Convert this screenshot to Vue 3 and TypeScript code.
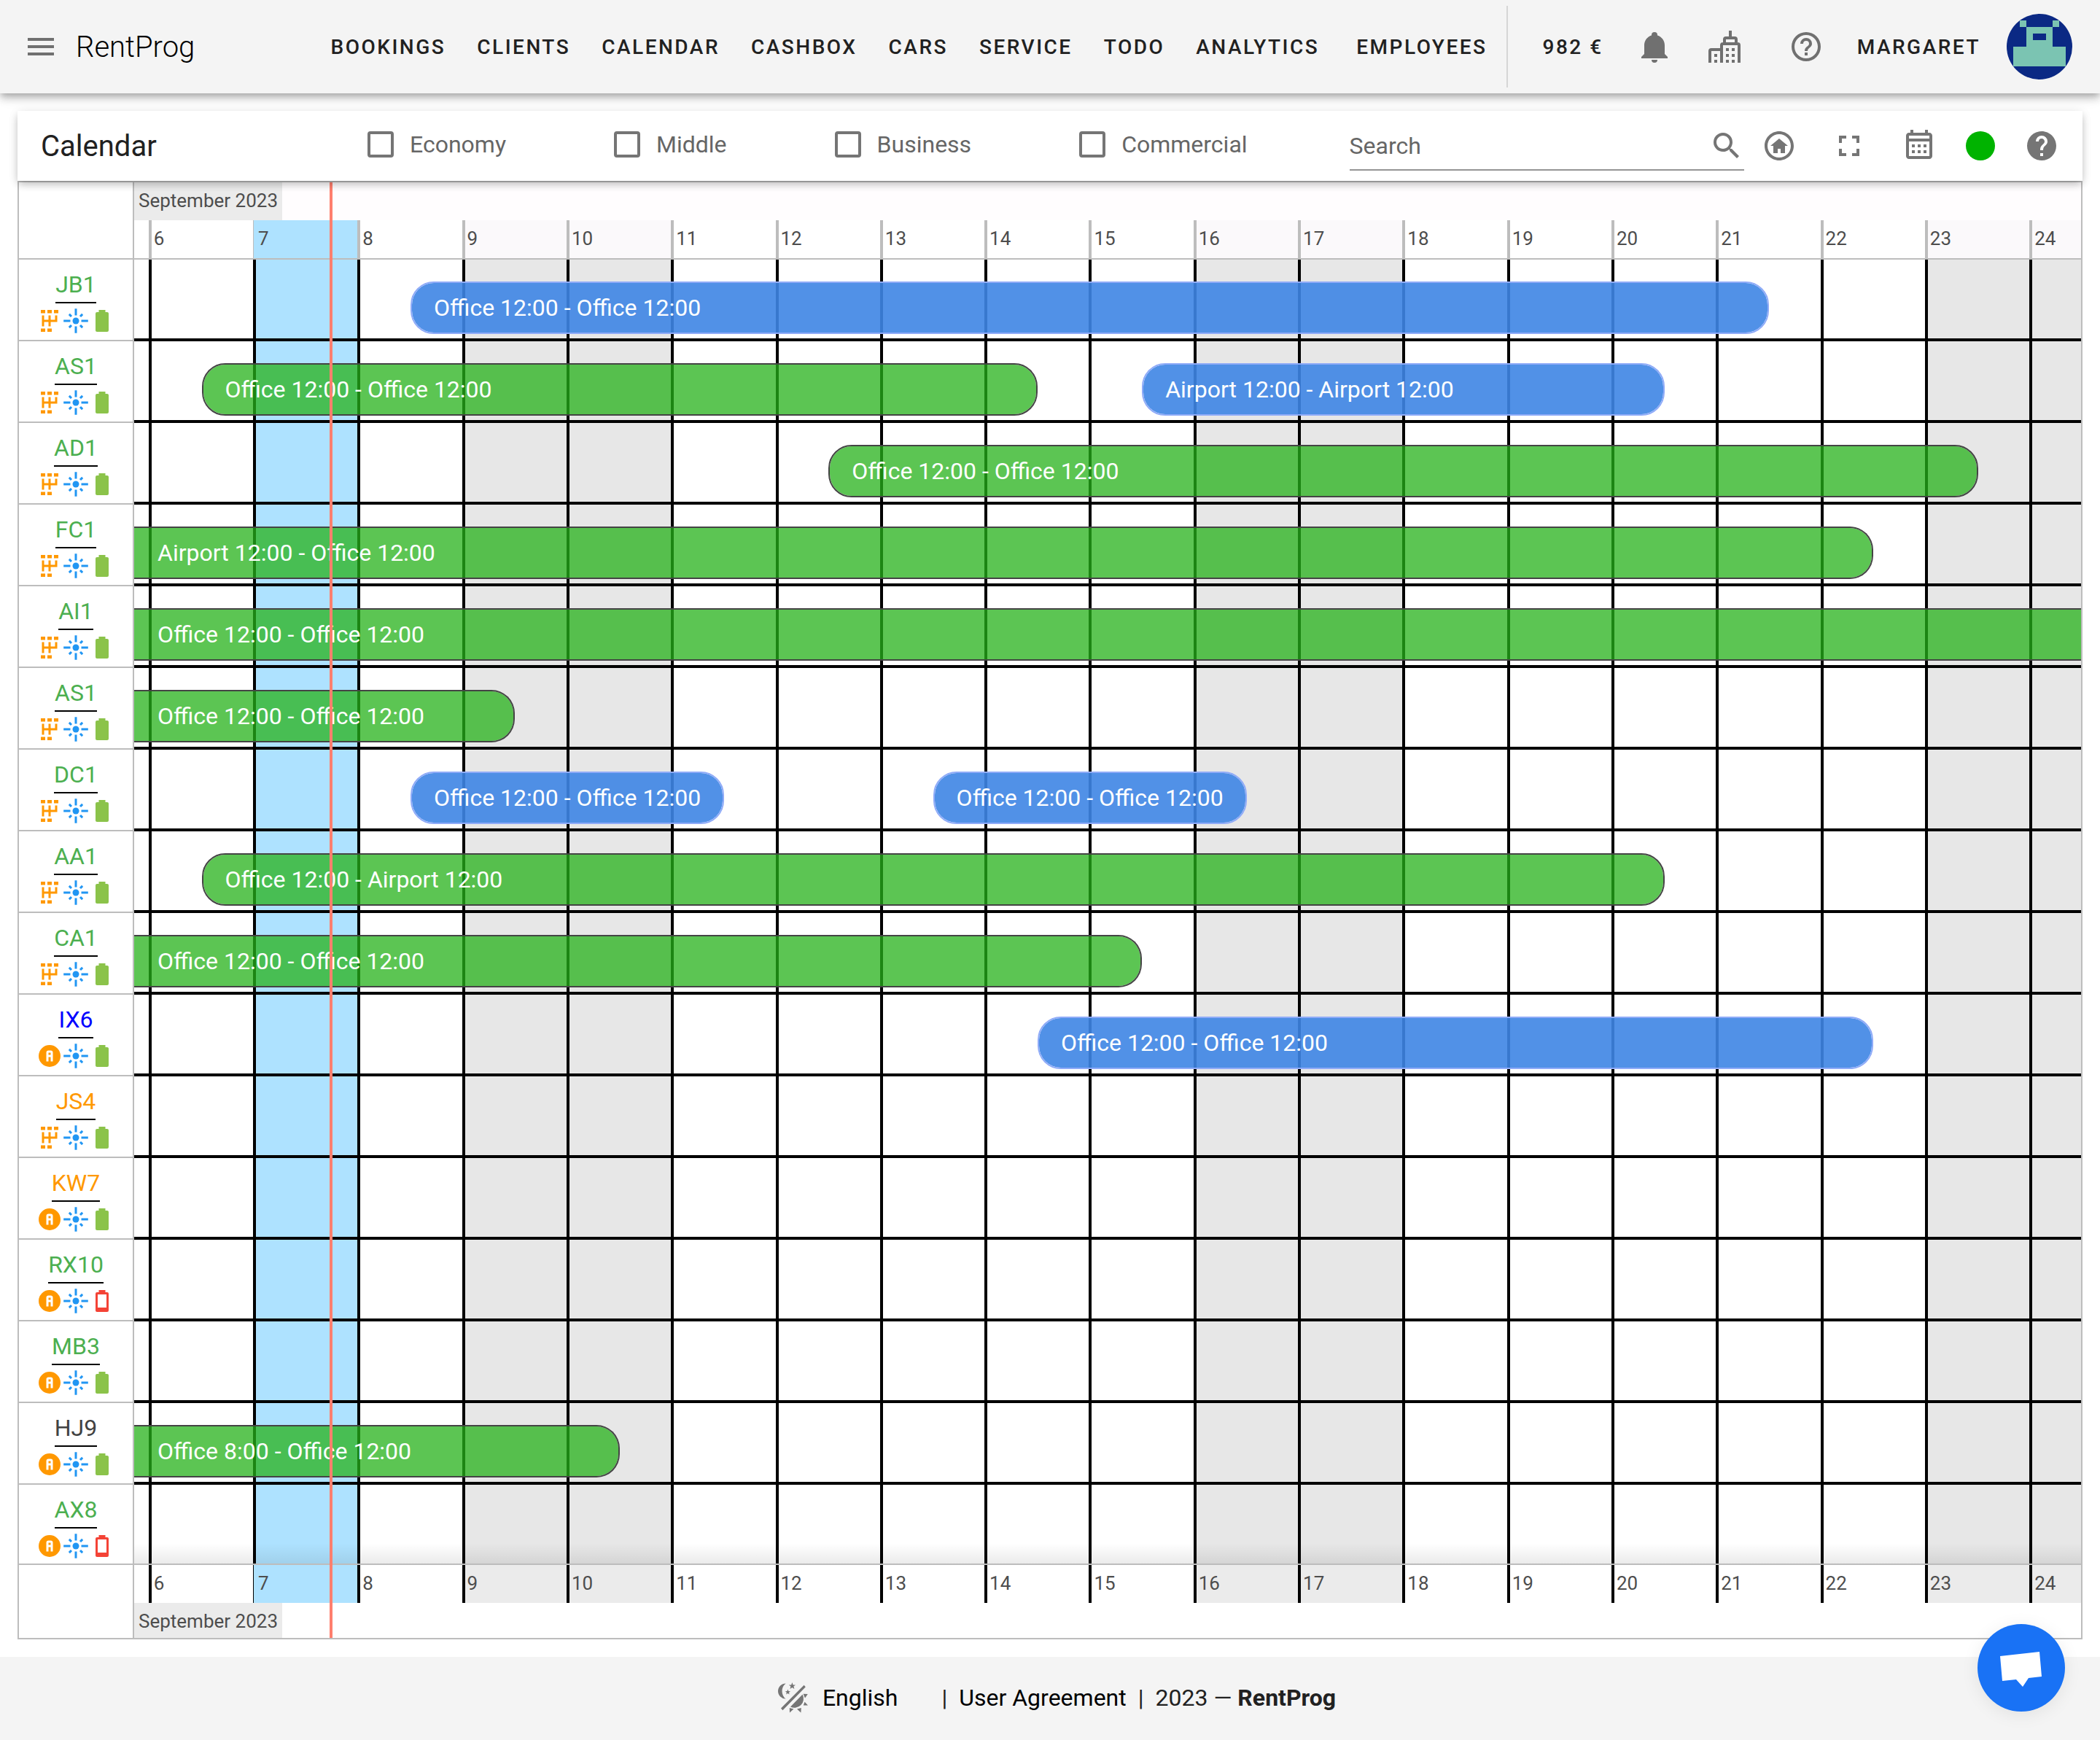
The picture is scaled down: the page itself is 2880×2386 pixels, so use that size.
<script setup lang="ts">
type Gear = 'manual' | 'auto'
type Charge = 'full' | 'low'
type Kind = 'active' | 'planned'

interface Booking {
  from: number
  to: number
  kind: Kind
  text: string
}

interface Car {
  code: string
  tone: string
  gear: Gear
  charge: Charge
  bookings: Booking[]
}

const navItems = ['Bookings', 'Clients', 'Calendar', 'Cashbox', 'Cars', 'Service', 'Todo', 'Analytics']
const classes = ['Economy', 'Middle', 'Business', 'Commercial']

const icons = {
  menu: 'M3,6H21V8H3V6M3,11H21V13H3V11M3,16H21V18H3V16Z',
  bell: 'M21,19V20H3V19L5,17V11C5,7.9 7.03,5.17 10,4.29C10,4.19 10,4.1 10,4A2,2 0 0,1 12,2A2,2 0 0,1 14,4C14,4.1 14,4.19 14,4.29C16.97,5.17 19,7.9 19,11V17L21,19M14,21A2,2 0 0,1 12,23A2,2 0 0,1 10,21',
  helpOutline: 'M11,18H13V16H11V18M12,2A10,10 0 0,0 2,12A10,10 0 0,0 12,22A10,10 0 0,0 22,12A10,10 0 0,0 12,2M12,20C7.59,20 4,16.41 4,12C4,7.59 7.59,4 12,4C16.41,4 20,7.59 20,12C20,16.41 16.41,20 12,20M12,6A4,4 0 0,0 8,10H10A2,2 0 0,1 12,8A2,2 0 0,1 14,10C14,12 11,11.75 11,15H13C13,12.75 16,12.5 16,10A4,4 0 0,0 12,6Z',
  help: 'M15.07,11.25L14.17,12.17C13.45,12.89 13,13.5 13,15H11V14.5C11,13.39 11.45,12.39 12.17,11.67L13.41,10.41C13.78,10.05 14,9.55 14,9C14,7.89 13.1,7 12,7A2,2 0 0,0 10,9H8A4,4 0 0,1 12,5A4,4 0 0,1 16,9C16,9.88 15.64,10.67 15.07,11.25M13,19H11V17H13M12,2A10,10 0 0,0 2,12A10,10 0 0,0 12,22A10,10 0 0,0 22,12C22,6.47 17.5,2 12,2Z',
  search: 'M9.5,3A6.5,6.5 0 0,1 16,9.5C16,11.11 15.41,12.59 14.44,13.73L14.71,14H15.5L20.5,19L19,20.5L14,15.5V14.71L13.73,14.44C12.59,15.41 11.11,16 9.5,16A6.5,6.5 0 0,1 3,9.5A6.5,6.5 0 0,1 9.5,3M9.5,5C7,5 5,7 5,9.5C5,12 7,14 9.5,14C12,14 14,12 14,9.5C14,7 12,5 9.5,5Z',
  home: 'M12,20C7.6,20 4,16.4 4,12C4,7.6 7.6,4 12,4C16.4,4 20,7.6 20,12C20,16.4 16.4,20 12,20M12,2C6.5,2 2,6.5 2,12C2,17.5 6.5,22 12,22C17.5,22 22,17.5 22,12C22,6.5 17.5,2 12,2M12,7L6,12H8V17H11V14H13V17H16V12H18L12,7Z',
  fullscreen: 'M5,5H10V7H7V10H5V5M14,5H19V10H17V7H14V5M17,14H19V19H14V17H17V14M10,17V19H5V14H7V17H10Z',
  calendar: 'M7 11H9V13H7V11M21 5V19C21 20.11 20.11 21 19 21H5C3.89 21 3 20.1 3 19V5C3 3.9 3.9 3 5 3H6V1H8V3H16V1H18V3H19C20.11 3 21 3.9 21 5M5 7H19V5H5V7M19 19V9H5V19H19M15 13V11H17V13H15M11 13V11H13V13H11M7 15H9V17H7V15M15 17V15H17V17H15M11 17V15H13V17H11Z',
  manual: 'M4,2H8V5H4V2M10,2H14V5H10V2M16,2H20V5H16V2M4,19H8V22H4V19M10,19H14V22H10V19M5,7H7V11H11V7H13V11H17V7H19V13H13V17H11V13H7V17H5V7Z',
  auto: 'M11,7A2,2 0 0,0 9,9V17H11V13H13V17H15V9A2,2 0 0,0 13,7H11M11,9H13V11H11V9M12,2A10,10 0 0,1 22,12A10,10 0 0,1 12,22A10,10 0 0,1 2,12A10,10 0 0,1 12,2Z',
  full: 'M16.67,4H15V2H9V4H7.33A1.33,1.33 0 0,0 6,5.33V20.67C6,21.4 6.6,22 7.33,22H16.67A1.33,1.33 0 0,0 18,20.67V5.33C18,4.6 17.4,4 16.67,4Z',
  low: 'M16,18H8V6H16M16.67,4H15V2H9V4H7.33A1.33,1.33 0 0,0 6,5.33V20.67C6,21.4 6.6,22 7.33,22H16.67A1.33,1.33 0 0,0 18,20.67V5.33C18,4.6 17.4,4 16.67,4Z',
}

// The visible window, in days of September: a sliver of the 5th up to the middle of the 24th.
const firstVisible = 5.8625
const lastVisible = 24.4945
const now = 7.733
const days = Array.from({ length: 19 }, (_, i) => i + 6)
const weekend = new Set([9, 10, 16, 17, 23, 24])

const lineInset = 0.008

const percent = (day: number) => ((day - firstVisible) / (lastVisible - firstVisible)) * 100

const barStyle = (b: Booking) => {
  const left = percent(Math.max(b.from + lineInset, firstVisible))
  const right = percent(Math.min(b.to + lineInset, lastVisible))
  return { left: `${left}%`, width: `${right - left}%` }
}

const dayClass = (d: number) => ({ today: d === 7, weekend: weekend.has(d) })

const oo = 'Office 12:00 - Office 12:00'
const car = (code: string, tone: string, gear: Gear, charge: Charge, bookings: Booking[] = []): Car =>
  ({ code, tone, gear, charge, bookings })
const active = (from: number, to: number, text = oo): Booking => ({ from, to, kind: 'active', text })
const planned = (from: number, to: number, text = oo): Booking => ({ from, to, kind: 'planned', text })

const cars: Car[] = [
  car('JB1', 'green', 'manual', 'full', [planned(8.5, 21.5)]),
  car('AS1', 'green', 'manual', 'full', [active(6.5, 14.5), planned(15.5, 20.5, 'Airport 12:00 - Airport 12:00')]),
  car('AD1', 'green', 'manual', 'full', [active(12.5, 23.5)]),
  car('FC1', 'green', 'manual', 'full', [active(1.5, 22.5, 'Airport 12:00 - Office 12:00')]),
  car('AI1', 'green', 'manual', 'full', [active(1.5, 28.5)]),
  car('AS1', 'green', 'manual', 'full', [active(1.5, 9.5)]),
  car('DC1', 'green', 'manual', 'full', [planned(8.5, 11.5), planned(13.5, 16.5)]),
  car('AA1', 'green', 'manual', 'full', [active(6.5, 20.5, 'Office 12:00 - Airport 12:00')]),
  car('CA1', 'green', 'manual', 'full', [active(1.5, 15.5)]),
  car('IX6', 'blue', 'auto', 'full', [planned(14.5, 22.5)]),
  car('JS4', 'orange', 'manual', 'full'),
  car('KW7', 'orange', 'auto', 'full'),
  car('RX10', 'green', 'auto', 'low'),
  car('MB3', 'green', 'auto', 'full'),
  car('HJ9', 'dark', 'auto', 'full', [active(1.5, 10.5, 'Office 8:00 - Office 12:00')]),
  car('AX8', 'green', 'auto', 'low'),
]
</script>

<template>
  <div class="app">
    <header class="topbar">
      <button class="icon-btn" type="button" aria-label="Menu">
        <svg class="icon" viewBox="0 0 24 24"><path :d="icons.menu" /></svg>
      </button>
      <span class="brand">RentProg</span>
      <nav class="nav">
        <a v-for="item in navItems" :key="item" href="#">{{ item }}</a>
        <a class="employees" href="#">Employees</a>
      </nav>
      <div class="account">
        <a class="balance" href="#">982 €</a>
        <button class="icon-btn bell" type="button" aria-label="Notifications">
          <svg class="icon" viewBox="0 0 24 24"><path :d="icons.bell" /></svg>
        </button>
        <button class="icon-btn city" type="button" aria-label="Branches">
          <svg class="icon" viewBox="0 0 24 24">
            <g fill="none" stroke="currentColor" stroke-width="2">
              <path d="M2 23V15a1 1 0 0 1 1-1H10M10 23V11a1 1 0 0 1 1-1H21a1 1 0 0 1 1 1V23M12 10V7a1 1 0 0 1 1-1H19a1 1 0 0 1 1 1V10M16 1V6" />
            </g>
            <path d="M13 13H15V15H13ZM17 13H19V15H17ZM13 17H15V19H13ZM17 17H19V19H17ZM13 21H15V23H13ZM17 21H19V23H17ZM5 17H7V19H5ZM5 21H7V23H5Z" />
          </svg>
        </button>
        <button class="icon-btn faq" type="button" aria-label="Help">
          <svg class="icon" viewBox="0 0 24 24"><path :d="icons.helpOutline" /></svg>
        </button>
        <a class="user" href="#">Margaret</a>
        <svg class="avatar" viewBox="0 0 10 10" shape-rendering="crispEdges" aria-hidden="true">
          <rect width="10" height="10" fill="#0b2984" />
          <path fill="#7bc4b2" fill-rule="evenodd" d="M2 1H3V2H7V1H8V2H7V5H9V8H1V5H3V2H2ZM4 3V4H6V3Z" />
        </svg>
      </div>
    </header>

    <main class="content">
      <section class="toolbar">
        <h1 class="title">Calendar</h1>
        <div class="filters">
          <label v-for="c in classes" :key="c" class="filter">
            <input type="checkbox" class="check" />
            <span>{{ c }}</span>
          </label>
        </div>
        <div class="search">
          <input type="text" placeholder="Search" aria-label="Search" />
          <svg class="icon" viewBox="0 0 24 24"><path :d="icons.search" /></svg>
        </div>
        <div class="tools">
          <button class="icon-btn" type="button" aria-label="Home">
            <svg class="icon" viewBox="0 0 24 24"><path :d="icons.home" /></svg>
          </button>
          <button class="icon-btn" type="button" aria-label="Full screen">
            <svg class="icon" viewBox="0 0 24 24"><path :d="icons.fullscreen" /></svg>
          </button>
          <button class="icon-btn" type="button" aria-label="Choose dates">
            <svg class="icon" viewBox="0 0 24 24"><path :d="icons.calendar" /></svg>
          </button>
        </div>
        <div class="status">
          <span class="dot"></span>
          <button class="icon-btn" type="button" aria-label="Legend">
            <svg class="icon" viewBox="0 0 24 24"><path :d="icons.help" /></svg>
          </button>
        </div>
      </section>

      <section class="board">
        <div class="head">
          <div class="side"></div>
          <div class="axis">
            <div class="month"><span>September 2023</span></div>
            <div class="days">
              <div></div>
              <div v-for="d in days" :key="d" class="day" :class="dayClass(d)">{{ d }}</div>
            </div>
          </div>
        </div>

        <div v-for="(c, i) in cars" :key="i" class="row">
          <div class="side">
            <a class="code" :class="c.tone" href="#">{{ c.code }}</a>
            <div class="marks">
              <svg class="mark gear" viewBox="0 0 24 24"><path :d="icons[c.gear]" /></svg>
              <svg class="mark wash" viewBox="0 0 24 24">
                <circle cx="12" cy="12" r="3" />
                <path fill="none" stroke="currentColor" stroke-width="2" d="M12 .8V7M12 17V23.200M.8 12H7M17 12H23.200M5.900 5.900L8 8M16 16L18.100 18.100M18.100 5.900L16 8M8 16L5.900 18.100" />
              </svg>
              <svg class="mark" :class="c.charge" viewBox="0 0 24 24"><path :d="icons[c.charge]" /></svg>
            </div>
          </div>
          <div class="lane">
            <div class="cells">
              <div></div>
              <div v-for="d in days" :key="d" class="cell" :class="dayClass(d)"></div>
            </div>
            <a
              v-for="b in c.bookings"
              :key="b.from"
              class="bar"
              :class="[b.kind, { 'open-left': b.from < firstVisible, 'open-right': b.to > lastVisible }]"
              :style="barStyle(b)"
              href="#"
            >{{ b.text }}</a>
          </div>
        </div>

        <div class="head foot">
          <div class="side"></div>
          <div class="axis">
            <div class="days">
              <div></div>
              <div v-for="d in days" :key="d" class="day" :class="dayClass(d)">{{ d }}</div>
            </div>
            <div class="month"><span>September 2023</span></div>
          </div>
        </div>

        <div class="overlay">
          <div class="now" :style="{ left: percent(now) + '%' }"></div>
        </div>
      </section>
    </main>

    <footer class="footer">
      <button class="icon-btn" type="button" aria-label="Switch theme">
        <svg class="icon" viewBox="0 0 24 24">
          <path d="M19.300 3.400L20.400 4.600L4.700 20.600L3.500 19.200ZM6.800 2.200A5.300 5.300 0 0 0 6.800 12.800A6.800 6.800 0 0 1 6.800 2.200Z" />
          <path d="M18.300 9.800A6.200 6.200 0 0 1 10 18.200Z" />
          <path d="M18.800 9.400L21.900 9.500L20 12.300ZM19.800 14.900L22 17.200L18.900 17.200ZM9.400 19L12.200 19.800L9.500 22.200ZM14.500 19.800L17.400 19L17.200 22.200Z" />
          <path d="M11.200 1.500L11.800 3.200L13.500 3.200L12.200 4.300L12.700 6L11.200 5L9.700 6L10.200 4.300L8.900 3.200L10.600 3.200ZM8.200 6.200L8.700 7.500L10 7.600L9 8.400L9.300 9.700L8.200 9L7.100 9.700L7.400 8.400L6.400 7.600L7.700 7.500Z" />
        </svg>
      </button>
      <button class="lang" type="button">English</button>
      <span>|</span>
      <a href="#">User Agreement</a>
      <span>|</span>
      <span>2023 — <strong>RentProg</strong></span>
    </footer>

    <button class="chat" type="button" aria-label="Open chat">
      <svg viewBox="-60 -60 120 120"><path fill="#fff" d="M-29-16L25-22L28 12L10 14L2 26L-7 16L-26 18Z" /></svg>
    </button>
  </div>
</template>

<style>
body {
  margin: 0;
  background: #fff;
}
</style>

<style scoped>
.app {
  font-family: Roboto, sans-serif;
  font-size: 32px;
  color: #212121;
}

.app *,
.app *::before {
  box-sizing: border-box;
}

a {
  color: inherit;
  text-decoration: none;
}

button {
  margin: 0;
  padding: 0;
  border: 0;
  background: none;
  font: inherit;
  color: inherit;
}

.icon-btn {
  display: block;
  flex: none;
  width: 48px;
  height: 48px;
  color: #757575;
}

.icon {
  display: block;
  flex: none;
  width: 48px;
  height: 48px;
  fill: currentColor;
}

.topbar {
  position: relative;
  display: flex;
  align-items: center;
  height: 128px;
  padding: 0 38px 0 32px;
  background: #f4f4f4;
  box-shadow: 0 4px 8px -2px rgba(0, 0, 0, 0.2), 0 8px 10px rgba(0, 0, 0, 0.14), 0 2px 20px rgba(0, 0, 0, 0.12);
  white-space: nowrap;
}

.topbar .icon-btn {
  color: #707070;
}

.brand {
  margin-left: 24px;
  font-size: 40px;
  font-weight: 300;
  color: #000;
}

.nav,
.account {
  display: flex;
  align-items: center;
  font-size: 28px;
  font-weight: 500;
  letter-spacing: 0.0892857em;
  text-transform: uppercase;
}

.nav {
  gap: 43px;
  height: 112px;
  margin-left: auto;
  padding-right: 26px;
  border-right: 2px solid #d6d6d6;
}

.nav .employees {
  margin-left: 8px;
}

.account .balance {
  margin-left: 48px;
}

.bell {
  margin-left: 46px;
}

.city {
  margin-left: 48px;
}

.faq {
  margin-left: 64px;
}

.user {
  margin-left: 46px;
}

.avatar {
  width: 90px;
  height: 90px;
  margin-left: 36px;
  border-radius: 50%;
}

.content {
  padding: 24px;
}

.toolbar {
  position: relative;
  z-index: 2;
  display: flex;
  align-items: center;
  height: 96px;
  padding: 0 32px;
  background: #fff;
  box-shadow: 0 6px 10px -2px rgba(0, 0, 0, 0.16), 0 4px 12px rgba(0, 0, 0, 0.1), 0 2px 16px rgba(0, 0, 0, 0.06);
}

.title {
  flex: 0 1 448px;
  margin: 0;
  font-size: 40px;
  font-weight: 400;
}

.filters {
  display: flex;
  gap: 148px;
  padding-bottom: 4px;
  color: #666;
}

.filter {
  display: flex;
  align-items: center;
  gap: 22px;
}

.check {
  appearance: none;
  width: 36px;
  height: 36px;
  margin: 0;
  border: 4px solid #757575;
  border-radius: 4px;
}

.search {
  display: flex;
  flex: 1;
  align-items: center;
  height: 68px;
  margin-left: 140px;
  padding-top: 2px;
  border-bottom: 2px solid #949494;
  color: #757575;
}

.search input {
  flex: 1;
  min-width: 0;
  height: 48px;
  padding: 0;
  border: 0;
  outline: 0;
  background: none;
  font: inherit;
}

.search input::placeholder {
  color: #666;
  opacity: 1;
}

.tools {
  display: flex;
  gap: 48px;
  margin-left: 24px;
}

.status {
  display: flex;
  align-items: center;
  gap: 36px;
  margin-left: 40px;
}

.dot {
  width: 40px;
  height: 40px;
  border-radius: 50%;
  background: #00b300;
}

.status .icon-btn {
  margin-left: 4px;
}

.board {
  position: relative;
  border: 2px solid #bdbdbd;
}

.head,
.row {
  display: flex;
}

.head {
  border-bottom: 2px solid #bdbdbd;
  font-size: 26px;
  line-height: 50px;
  color: #4d4d4d;
}

.foot {
  border-bottom: 0;
}

.side {
  flex: none;
  width: 158px;
  border-right: 2px solid #bdbdbd;
}

.axis,
.lane {
  flex: 1;
  min-width: 0;
}

.month {
  display: flex;
  height: 52px;
  background: #fffdfe;
  overflow: hidden;
}

.month span {
  padding: 0 6px;
  background: #ebebeb;
}

.foot .month {
  height: 48px;
  background: #fff;
}

.days,
.cells {
  display: grid;
  grid-template-columns: minmax(0, 1375fr) repeat(18, minmax(0, 10000fr)) minmax(0, 4945fr);
}

.day {
  height: 52px;
  padding-left: 3px;
  border-left: 4px solid #bdbdbd;
}

.head .weekend {
  background-color: #fbf9fb;
}

.foot .weekend {
  background-color: #ebebeb;
}

.foot .day {
  border-color: #000;
}

.head .today {
  padding-left: 6px;
  border-left-width: 1px;
}

.today {
  background-color: #aee2ff;
}

.row .side {
  height: 112px;
  padding-top: 10px;
  border-bottom: 2px solid #bdbdbd;
  text-align: center;
}

.row:nth-child(17) .side {
  height: 110px;
}

.code {
  display: inline-block;
  border-bottom: 2px solid #000;
  line-height: 48px;
  vertical-align: top;
}

.code.green {
  color: #4caf50;
}

.code.blue {
  color: #0000ff;
}

.code.orange {
  color: #ff9800;
}

.code.dark {
  color: #424242;
}

.marks {
  display: flex;
  justify-content: center;
  padding-top: 6px;
}

.mark {
  width: 36px;
  height: 36px;
  fill: currentColor;
}

.gear {
  color: #ff9800;
}

.wash {
  color: #2196f3;
}

.full {
  color: #8bc34a;
}

.low {
  color: #f44336;
}

.lane {
  position: relative;
  border-bottom: 4px solid #000;
}

.row:nth-child(17) .lane {
  border-bottom: 2px solid #bdbdbd;
}

.row:nth-child(17) .lane::after {
  content: '';
  position: absolute;
  inset: auto 0 0;
  height: 28px;
  background: linear-gradient(to top, rgba(0, 0, 0, 0.08), rgba(0, 0, 0, 0));
}

.cells {
  height: 100%;
}

.cell {
  border-left: 4px solid #000;
}

.cell.weekend {
  background: #e7e7e7;
}

.bar {
  position: absolute;
  top: 30px;
  height: 72px;
  padding-left: 30px;
  border: 2px solid #444;
  border-radius: 32px;
  overflow: hidden;
  line-height: 68px;
  white-space: nowrap;
  color: #fff;
  background-clip: padding-box;
}

.active {
  background-color: rgba(37, 177, 25, 0.75);
}

.planned {
  border-color: #8fabf8;
  background-color: rgba(62, 133, 228, 0.9);
}

.open-left {
  padding-left: 32px;
  border-left: 0;
  border-top-left-radius: 0;
  border-bottom-left-radius: 0;
}

.open-right {
  border-right: 0;
  border-top-right-radius: 0;
  border-bottom-right-radius: 0;
}

.overlay {
  position: absolute;
  inset: 0 0 0 158px;
  overflow: hidden;
  pointer-events: none;
}

.now {
  position: absolute;
  top: 0;
  bottom: 0;
  width: 4px;
  background: #ff7f6e;
}

.footer {
  display: flex;
  align-items: center;
  justify-content: center;
  gap: 16px;
  height: 114px;
  padding: 0 0 2px 16px;
  background: #f4f4f4;
}

.footer a,
.lang {
  color: #000;
}

.lang {
  margin-right: 44px;
}

.chat {
  position: fixed;
  right: 48px;
  bottom: 39px;
  z-index: 3;
  width: 120px;
  height: 120px;
  border-radius: 50%;
  background: #1972f5;
  box-shadow: 0 4px 24px rgba(0, 0, 0, 0.08);
}

.chat svg {
  display: block;
  width: 120px;
  height: 120px;
}
</style>
